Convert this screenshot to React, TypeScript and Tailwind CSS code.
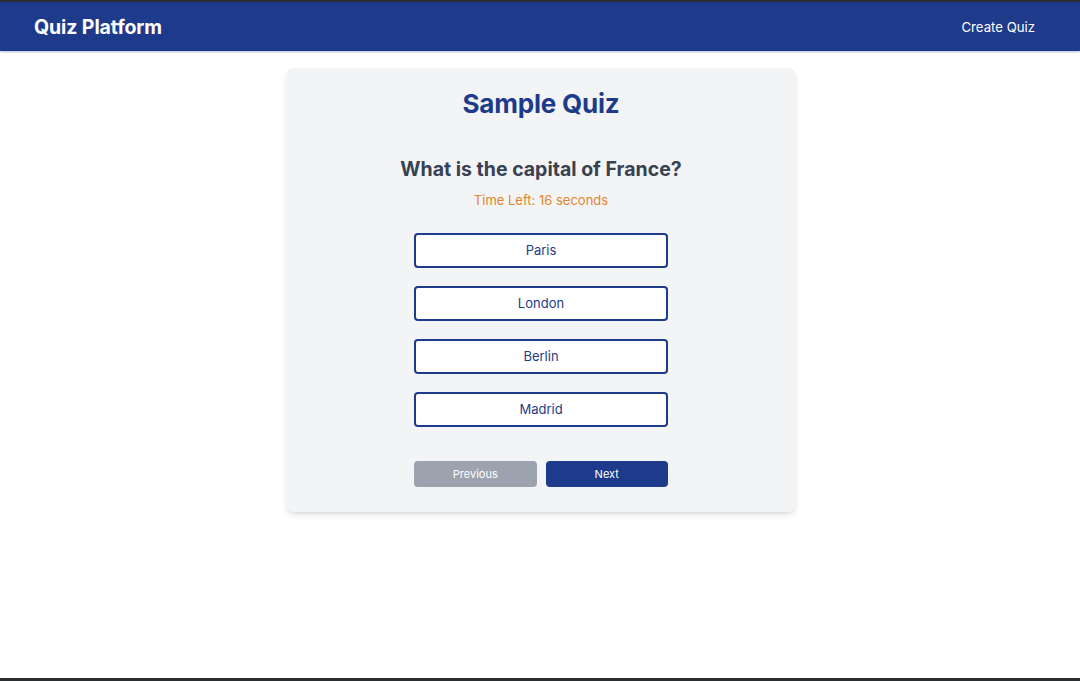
import React from "react";

export default function App() {
  const options = ["Paris", "London", "Berlin", "Madrid"];
  return (
    <div
      className="h-[681px] w-full flex flex-col bg-white border-t-2 border-b-[3px] border-[#2c2d31] overflow-hidden"
      style={{ fontFamily: "Inter, 'Noto Sans', sans-serif" }}
    >
      <header className="h-[49px] shrink-0 bg-[#1e3a8a] flex items-center justify-between pl-[34px] pr-[45px] pt-[2px] shadow-[0_1px_2px_rgba(30,58,138,0.35)]">
        <h1 className="text-white text-[19.5px] font-bold tracking-[-0.1px]">Quiz Platform</h1>
        <a className="text-white text-[13.2px]">Create Quiz</a>
      </header>
      <main className="flex-1 flex justify-center pt-[17px] pl-[2px]">
        <div className="w-[510px] h-fit bg-[#f3f4f6] rounded-lg shadow-md pt-[18px] pb-[25px] flex flex-col items-center">
          <h2 className="text-[26px] leading-[36px] font-bold text-[#1e3a8a] tracking-[-0.2px]">Sample Quiz</h2>
          <h3 className="mt-[31px] text-[19.5px] leading-[32px] font-bold text-[#374151]">
            What is the capital of France?
          </h3>
          <p className="mt-[3px] text-[13px] leading-[24px] text-[#e5842c]">Time Left: 16 seconds</p>
          <div className="mt-[21px] w-[254px] flex flex-col gap-[18px]">
            {options.map((o) => (
              <button
                key={o}
                className="h-[35px] w-full bg-white border-2 border-[#1e3a8a] rounded text-[#1e3a8a] text-[13px]"
              >
                {o}
              </button>
            ))}
          </div>
          <div className="mt-[34px] w-[254px] flex gap-[9px]">
            <button className="flex-1 h-[26px] rounded bg-[#9ca3af] text-white text-[11px]">Previous</button>
            <button className="flex-1 h-[26px] rounded bg-[#1e3a8a] text-white text-[11px]">Next</button>
          </div>
        </div>
      </main>
    </div>
  );
}
